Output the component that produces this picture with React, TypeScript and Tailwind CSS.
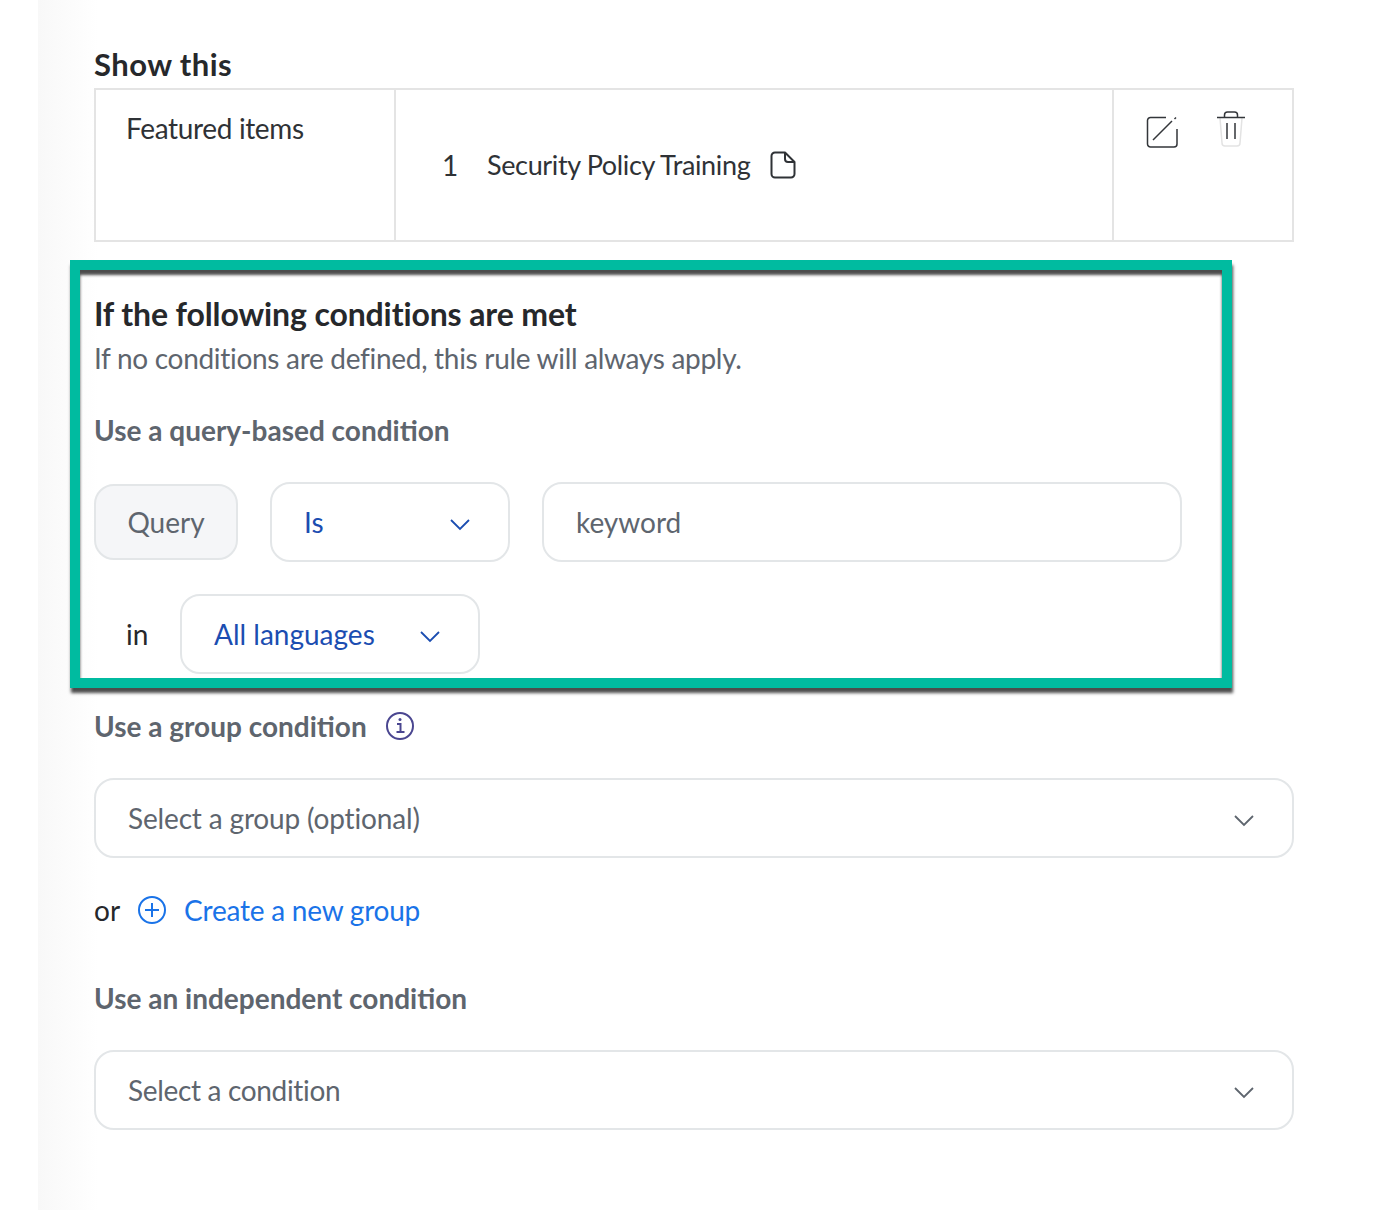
const font = "font-['Lato','Noto_Sans',sans-serif]";

function Chevron({ className }: { className: string }) {
  return (
    <svg width="22" height="14" viewBox="0 0 22 14" fill="none" className={`mt-[3px] ${className}`}>
      <path d="M2 3l9 9 9-9" stroke="currentColor" strokeWidth="1.8" />
    </svg>
  );
}

function Select({
  label,
  width,
  tracking,
  blue,
}: {
  label: string;
  width: string;
  tracking?: string;
  blue?: boolean;
}) {
  return (
    <div
      className={`flex h-[80px] items-center justify-between rounded-[20px] border-2 border-[#e3e6e8] bg-white pl-[32px] pr-[37px] ${width} ${
        blue ? "text-[#1b4db1]" : "text-[#5e656e]"
      }`}
    >
      <span className={tracking}>{label}</span>
      <Chevron className={blue ? "text-[#1b4db1]" : "text-[#5e656e]"} />
    </div>
  );
}

function SubHeading({ children }: { children: React.ReactNode }) {
  return <h3 className="text-[28px] font-bold leading-[36px] text-[#5e656e]">{children}</h3>;
}

export default function App() {
  return (
    <div className={`flex h-[1210px] w-[1398px] overflow-hidden bg-white text-[28px] ${font}`}>
      <div className="w-[38px] shrink-0" />
      <div className="relative w-[1360px] bg-gradient-to-r from-[#f8f8f8] to-white to-[60px] pl-[56px]">
        <h2 className="pt-[46px] text-[31px] font-bold leading-[36px] tracking-[0.45px] text-[#26282b]">Show this</h2>

        <div className="mt-[6px] flex h-[154px] w-[1200px] border-2 border-[#e4e4e4] bg-white text-[#2f3236]">
          <div className="w-[300px] shrink-0 border-r-2 border-[#e4e4e4] pl-[30px] pt-[20px] leading-[36px] tracking-[-0.35px]">
            Featured items
          </div>
          <div className="flex w-[718px] shrink-0 items-center border-r-2 border-[#e4e4e4] pl-[46px]">
            <span className="w-[45px]">1</span>
            <span className="text-[27px] tracking-[-0.36px]">Security Policy Training</span>
            <svg width="26" height="28" viewBox="0 0 26 28" fill="none" className="ml-[20px]">
              <path
                d="M5 1.5h10l9.500 9.500v12a3.500 3.500 0 0 1-3.500 3.500H5A3.500 3.500 0 0 1 1.500 23V5A3.500 3.500 0 0 1 5 1.500zM15 1.500V8a3 3 0 0 0 3 3h6.500"
                stroke="#2f3236"
                strokeWidth="2"
                strokeLinejoin="round"
              />
            </svg>
          </div>
          <div className="flex items-start gap-[38px] pl-[32px] pt-[20px]">
            <svg width="32" height="32" viewBox="0 0 32 32" fill="none" className="mt-[6px]">
              <path
                d="M20 1.500H4.500a3 3 0 0 0-3 3V28a3 3 0 0 0 3 3H28a3 3 0 0 0 3-3V13"
                stroke="#33363a"
                strokeWidth="1.500"
              />
              <path d="M7 24L26 5M28.500 3l1.500-1.500" stroke="#33363a" strokeWidth="1.500" />
            </svg>
            <svg width="30" height="38" viewBox="0 0 30 38" fill="none">
              <path d="M4 8l2 25a3 3 0 0 0 3 3h12a3 3 0 0 0 3-3l2-25" stroke="#e3e3e3" strokeWidth="1.500" />
              <path d="M1 7.500h28" stroke="#33363a" strokeWidth="1.500" />
              <path d="M8.500 7.500V5a3 3 0 0 1 3-3h7a3 3 0 0 1 3 3v2.500" stroke="#33363a" strokeWidth="1.500" />
              <path d="M11 13v16M19 13v16" stroke="#33363a" strokeWidth="1.500" />
            </svg>
          </div>
        </div>

        <h2 className="mt-[53px] text-[32px] font-bold leading-[38px] tracking-[-0.12px] text-[#26282b]">
          If the following conditions are met
        </h2>
        <p className="mt-[7px] leading-[36px] tracking-[-0.3px] text-[#5e656e]">
          If no conditions are defined, this rule will always apply.
        </p>

        <div className="mt-[36px]">
          <SubHeading>Use a query-based condition</SubHeading>
        </div>

        <div className="mt-[34px] flex items-center gap-[32px]">
          <div className="flex h-[76px] w-[144px] items-center justify-center rounded-[20px] border-2 border-[#e3e6e8] bg-[#f5f6f8] text-[#5e656e]">
            Query
          </div>
          <Select label="Is" width="w-[240px]" blue />
          <div className="flex h-[80px] w-[640px] items-center rounded-[20px] border-2 border-[#e3e6e8] bg-white pl-[32px] text-[#5e656e]">
            keyword
          </div>
        </div>

        <div className="mt-[32px] flex items-center">
          <span className="w-[86px] pl-[32px] text-[#26282b]">in</span>
          <Select label="All languages" width="w-[300px]" blue />
        </div>

        <div className="mt-[34px] flex items-center gap-[18px]">
          <SubHeading>Use a group condition</SubHeading>
          <svg width="30" height="30" viewBox="0 0 30 30" fill="none">
            <circle cx="15" cy="15" r="13" stroke="#4a4690" strokeWidth="2" />
            <path d="M12 13h3.500v8M11.500 21h8" stroke="#4a4690" strokeWidth="2" />
            <circle cx="15" cy="8.500" r="1.500" fill="#4a4690" />
          </svg>
        </div>

        <div className="mt-[34px]">
          <Select label="Select a group (optional)" width="w-[1200px]" tracking="tracking-[-0.16px]" />
        </div>

        <div className="mt-[34px] flex items-center leading-[36px]">
          <span className="text-[#26282b]">or</span>
          <svg width="30" height="30" viewBox="0 0 30 30" fill="none" className="ml-[17px]">
            <circle cx="15" cy="15" r="13" stroke="#1a73e8" strokeWidth="2" />
            <path d="M15 8v14M8 15h14" stroke="#1a73e8" strokeWidth="2" />
          </svg>
          <span className="ml-[17px] tracking-[-0.22px] text-[#1a73e8]">Create a new group</span>
        </div>

        <div className="mt-[52px]">
          <SubHeading>Use an independent condition</SubHeading>
        </div>

        <div className="mt-[34px]">
          <Select label="Select a condition" width="w-[1200px]" tracking="tracking-[-0.33px]" />
        </div>

        {/* annotation frame drawn over the form */}
        <div className="pointer-events-none absolute left-[32px] top-[260px] h-[428px] w-[1162px] border-[10px] border-[#00bba0] shadow-[1px_5px_3px_rgba(0,0,0,0.7),inset_0_5px_3px_rgba(0,0,0,0.7)]" />
      </div>
    </div>
  );
}
